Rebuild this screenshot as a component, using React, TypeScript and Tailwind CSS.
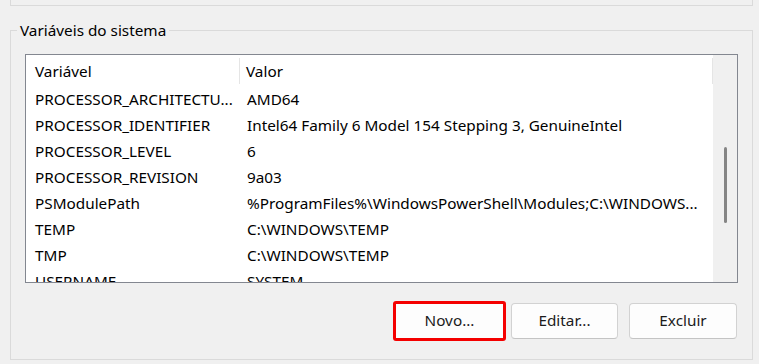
const rows: [string, string][] = [
  ['PROCESSOR_ARCHITECTU...', 'AMD64'],
  ['PROCESSOR_IDENTIFIER', 'Intel64 Family 6 Model 154 Stepping 3, GenuineIntel'],
  ['PROCESSOR_LEVEL', '6'],
  ['PROCESSOR_REVISION', '9a03'],
  ['PSModulePath', '%ProgramFiles%\\WindowsPowerShell\\Modules;C:\\WINDOWS...'],
  ['TEMP', 'C:\\WINDOWS\\TEMP'],
  ['TMP', 'C:\\WINDOWS\\TEMP'],
  ['USERNAME', 'SYSTEM'],
]

function WinButton({ label, highlighted, className }: { label: string; highlighted?: boolean; className?: string }) {
  if (highlighted) {
    return (
      <div className={`rounded-[3px] border-[3px] border-[#f40000] w-[113px] h-[40px] flex ${className ?? ''}`}>
        <button className="flex-1 bg-[#fdfdfd] text-[15.3px] text-[#1b1b1b] leading-none">{label}</button>
      </div>
    )
  }
  return (
    <button
      className={`h-[36px] rounded-[4px] border border-[#d2d2d2] border-b-[#c4c4c4] bg-[#fdfdfd] text-[15.3px] text-[#1b1b1b] leading-none ${className ?? ''}`}
    >
      {label}
    </button>
  )
}

export default function App() {
  return (
    <div
      className="w-[759px] h-[364px] bg-[#f0f0f0] overflow-hidden text-black"
      style={{ fontFamily: '"Noto Sans", "Open Sans", sans-serif' }}
    >
      <div className="ml-[10px] w-[743px] h-[6px] border-x border-b border-[#dadada]" />

      <fieldset className="ml-[10px] mt-[14px] w-[743px] h-[340px] border border-[#dadada] pl-[14px] pr-[14px]">
        <legend className="-ml-[8px] px-[3px] text-[15.3px] leading-[20px]">Variáveis do sistema</legend>

        <div className="mt-[14px] h-[229px] border border-[#838790] bg-white flex overflow-hidden">
          <div className="flex-1 min-w-0 pt-[1px]">
            <div className="flex h-[30px] text-[15.3px]">
              <div className="w-[214px] flex items-center pl-[9px] border-r border-[#e5e5e5] my-[2px]">Variável</div>
              <div className="flex-1 flex items-center pl-[6px] border-r border-[#e5e5e5] my-[2px]">Valor</div>
            </div>
            {rows.map(([name, value]) => (
              <div key={name} className="flex h-[26px] items-center text-[15.3px] whitespace-nowrap">
                <div className="w-[215px] pl-[9px] overflow-hidden">{name}</div>
                <div className="flex-1 pl-[6px] overflow-hidden">{value}</div>
              </div>
            ))}
          </div>
          <div className="w-[24px] bg-[#f0f0f0] flex justify-center pt-[92px]">
            <div className="w-[3px] h-[76px] rounded-full bg-[#858585]" />
          </div>
        </div>

        <div className="mt-[18px] pr-[1px] flex justify-end items-center">
          <WinButton label="Novo..." highlighted />
          <WinButton label="Editar..." className="w-[107px] ml-[5px]" />
          <WinButton label="Excluir" className="w-[108px] ml-[11px]" />
        </div>
      </fieldset>
    </div>
  )
}
